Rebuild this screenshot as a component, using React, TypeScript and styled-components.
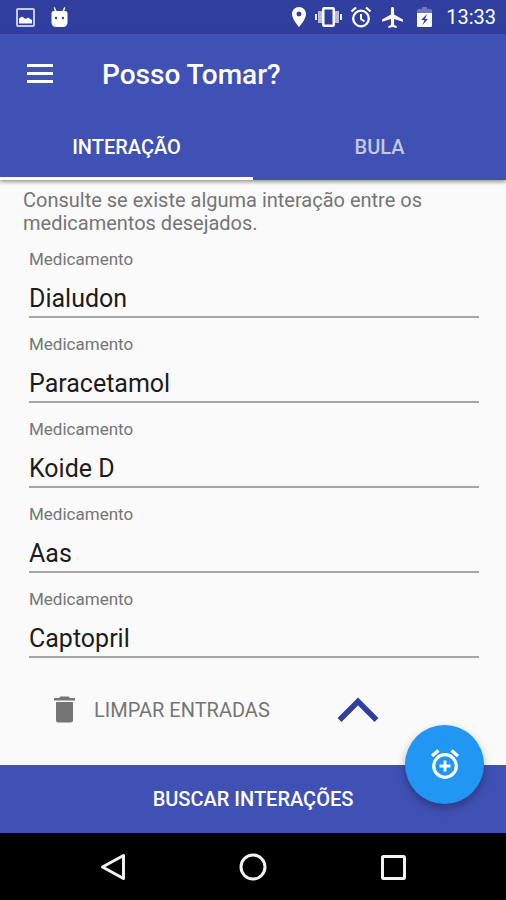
import React from "react";
import styled, { createGlobalStyle } from "styled-components";
import { MdAirplanemodeActive, MdLocationOn } from "react-icons/md";

const color = {
  primary: "#3f51b5",
  primaryDark: "#303f9f",
  accent: "#2196f3",
  surface: "#fafafa",
  textMuted: "#757575",
  text: "#1c1c1c",
};

const GlobalStyle = createGlobalStyle`
  *, *::before, *::after { box-sizing: border-box; }
  body { margin: 0; background: ${color.surface}; font-family: Roboto, sans-serif; }
  button, input { font-family: inherit; margin: 0; border: 0; padding: 0; background: none; border-radius: 0; }
  button { cursor: pointer; }
  svg { display: block; flex: none; }
`;

const Screen = styled.div`
  display: flex;
  flex-direction: column;
  min-height: 100vh;
  background: ${color.surface};
`;

const StatusBar = styled.div`
  display: flex;
  align-items: center;
  justify-content: space-between;
  height: 34px;
  padding: 0 10px 0 16px;
  background: ${color.primaryDark};
  color: #fff;
`;

const StatusGroup = styled.div<{ $gap: number }>`
  display: flex;
  align-items: center;
  gap: ${(p) => p.$gap}px;
`;

const Clock = styled.time`
  margin-left: 2px;
  font-size: 20px;
  line-height: 24px;
`;

const Header = styled.header`
  position: relative;
  background: ${color.primary};
  color: #fff;
  box-shadow: 0 2px 4px rgba(0, 0, 0, 0.4);
`;

const Toolbar = styled.div`
  display: flex;
  align-items: center;
  gap: 44px;
  height: 80px;
  padding: 0 22px;
`;

const IconButton = styled.button`
  display: flex;
  align-items: center;
  justify-content: center;
  color: inherit;
`;

const Title = styled.h1`
  margin: 0;
  padding-top: 2px;
  font-size: 28px;
  line-height: 32px;
  font-weight: 500;
`;

const Tabs = styled.div`
  display: grid;
  grid-template-columns: 1fr 1fr;
`;

const Tab = styled.button<{ $active?: boolean }>`
  height: 66px;
  padding-top: 2px;
  border-bottom: 3px solid ${(p) => (p.$active ? "#fff" : "transparent")};
  color: ${(p) => (p.$active ? "#fff" : "rgba(255, 255, 255, 0.7)")};
  font-size: 20px;
  line-height: 24px;
  font-weight: 500;
`;

const Content = styled.main`
  display: flex;
  flex-direction: column;
  flex: 1;
  padding: 9px 23px 0;
`;

const Intro = styled.p`
  margin: 0;
  color: ${color.textMuted};
  font-size: 20px;
  line-height: 23px;
`;

const Fields = styled.form`
  display: flex;
  flex-direction: column;
  gap: 14px;
  padding: 12px 4px 0 6px;
`;

const Field = styled.div`
  display: flex;
  flex-direction: column;
`;

const FieldLabel = styled.label`
  color: ${color.textMuted};
  font-size: 17px;
  line-height: 24px;
`;

const FieldInput = styled.input`
  && {
    width: 100%;
    height: 47px;
    padding: 12px 0 3px;
    border-bottom: 2px solid #a6a6a6;
    color: ${color.text};
    font-size: 25px;
    line-height: 30px;
    outline: none;
  }
`;

const Actions = styled.div`
  display: flex;
  align-items: center;
  gap: 67px;
  padding: 38px 31px 20px;
`;

const ClearButton = styled.button`
  display: flex;
  align-items: center;
  gap: 19px;
  color: ${color.textMuted};
  font-size: 20px;
  line-height: 24px;
`;

const Footer = styled.footer`
  position: relative;
`;

const SearchButton = styled.button`
  display: block;
  width: 100%;
  height: 68px;
  background: ${color.primary};
  color: #fff;
  font-size: 20px;
  line-height: 24px;
  font-weight: 500;
`;

const Fab = styled.button`
  position: absolute;
  top: -40px;
  right: 22px;
  display: flex;
  align-items: center;
  justify-content: center;
  width: 79px;
  height: 79px;
  border-radius: 50%;
  background: ${color.accent};
  color: #fff;
  box-shadow: 0 4px 9px rgba(0, 0, 0, 0.3);
`;

const NavBar = styled.nav`
  display: flex;
  align-items: center;
  justify-content: center;
  gap: 108px;
  height: 67px;
  background: #000;
  color: #f2f2f2;
`;

const PictureIcon = () => (
  <svg width="19" height="19" viewBox="0 0 19 19" aria-hidden="true">
    <rect x="1" y="1" width="17" height="17" rx="1" fill="none" stroke="#c5cae9" strokeWidth="2" />
    <path d="M3 15.500V10.500l3-2 3.500 2.500 2.500-1.500 4 2.500v3.500z" fill="#fff" />
  </svg>
);

const AndroidIcon = () => (
  <svg width="19" height="21" viewBox="0 0 19 21" aria-hidden="true">
    <path d="M4.500 1l1.500 4M14.500 1L13 5" stroke="#fff" strokeWidth="1.500" strokeLinecap="round" />
    <path d="M4 4h11q2.500 0 2.500 2.500V15q0 5-5 5h-6q-5 0-5-5V6.500Q1.500 4 4 4z" fill="#fff" />
    <circle cx="6" cy="11" r="1.200" fill={color.primaryDark} />
    <circle cx="13" cy="11" r="1.200" fill={color.primaryDark} />
  </svg>
);

const VibrationIcon = () => (
  <svg width="27" height="22" viewBox="0 0 27 22" aria-hidden="true">
    <path d="M3 5h4v12H3zM20 5h4v12h-4z" fill="#fff" fillOpacity="0.65" />
    <path d="M0 8h2v6H0zM25 8h2v6h-2z" fill="#fff" fillOpacity="0.9" />
    <rect x="8.250" y="2.250" width="10.500" height="17.500" rx="1" fill="none" stroke="#fff" strokeWidth="2.500" />
  </svg>
);

const AlarmIcon = () => (
  <svg width="22" height="22" viewBox="0 0 22 22" aria-hidden="true">
    <g fill="none" stroke="#fff" strokeWidth="2.300">
      <circle cx="11" cy="12.500" r="7.800" />
      <path d="M1.500 5.500l4.500-4M20.500 5.500L16 1.500" />
      <path d="M11 8v5l3.500 2.500" strokeWidth="2" />
    </g>
  </svg>
);

const BatteryIcon = () => (
  <svg width="15" height="22" viewBox="0 0 15 22" aria-hidden="true">
    <path d="M5 1h5v2h3.500q1.500 0 1.500 1.500V7H0V4.500Q0 3 1.500 3H5z" fill="#fff" fillOpacity="0.3" />
    <path
      fillRule="evenodd"
      d="M0 7h15v12.500q0 1.500-1.500 1.500h-12Q0 21 0 19.500zM10 8L4 14h3.500L5.500 19l5.500-6H8z"
      fill="#fff"
    />
  </svg>
);

const MenuIcon = () => (
  <svg width="36" height="36" viewBox="0 0 36 36" aria-hidden="true">
    <path d="M5 9.500h26M5 17.500h26M5 25.500h26" stroke="currentColor" strokeWidth="3" />
  </svg>
);

const TrashIcon = () => (
  <svg width="21" height="27" viewBox="0 0 21 27" aria-hidden="true">
    <path d="M0 2h5l1.500-1.500h8L16 2h5v2.500H0zM2 6h17v18q0 2.500-2.500 2.500h-12Q2 26.500 2 24z" fill="currentColor" />
  </svg>
);

const ChevronUpIcon = () => (
  <svg width="42" height="27" viewBox="0 0 42 27" aria-hidden="true">
    <path d="M2.500 24L21 5.500 39.500 24" fill="none" stroke="#303f9f" strokeWidth="5.500" />
  </svg>
);

const AlarmAddIcon = () => (
  <svg width="30" height="32" viewBox="0 0 30 32" aria-hidden="true">
    <g fill="none" stroke="currentColor">
      <circle cx="15" cy="17" r="11.300" strokeWidth="3.200" />
      <path d="M2 7l6.500-5.500M28 7l-6.500-5.500" strokeWidth="3.400" />
      <path d="M15 11.500v11M9.500 17h11" strokeWidth="2.800" />
    </g>
  </svg>
);

const BackIcon = () => (
  <svg width="32" height="32" viewBox="0 0 32 32" aria-hidden="true">
    <path d="M26.500 4.500v23L5.500 16z" fill="none" stroke="currentColor" strokeWidth="3" strokeLinejoin="round" />
  </svg>
);

const HomeIcon = () => (
  <svg width="32" height="32" viewBox="0 0 32 32" aria-hidden="true">
    <circle cx="16" cy="16" r="12" fill="none" stroke="currentColor" strokeWidth="3" />
  </svg>
);

const RecentsIcon = () => (
  <svg width="32" height="32" viewBox="0 0 32 32" aria-hidden="true">
    <rect x="5.500" y="5.500" width="22" height="22" rx="1" fill="none" stroke="currentColor" strokeWidth="3" />
  </svg>
);

const medicines = ["Dialudon", "Paracetamol", "Koide D", "Aas", "Captopril"];

export default function App() {
  return (
    <Screen>
      <GlobalStyle />
      <StatusBar>
        <StatusGroup $gap={15}>
          <PictureIcon />
          <AndroidIcon />
        </StatusGroup>
        <StatusGroup $gap={8}>
          <StatusGroup $gap={4}>
            <MdLocationOn size={24} />
            <VibrationIcon />
          </StatusGroup>
          <AlarmIcon />
          <StatusGroup $gap={12}>
            <MdAirplanemodeActive size={25} />
            <BatteryIcon />
            <Clock>13:33</Clock>
          </StatusGroup>
        </StatusGroup>
      </StatusBar>

      <Header>
        <Toolbar>
          <IconButton type="button" aria-label="Menu">
            <MenuIcon />
          </IconButton>
          <Title>Posso Tomar?</Title>
        </Toolbar>
        <Tabs role="tablist">
          <Tab type="button" role="tab" aria-selected="true" $active>
            INTERAÇÃO
          </Tab>
          <Tab type="button" role="tab" aria-selected="false">
            BULA
          </Tab>
        </Tabs>
      </Header>

      <Content>
        <Intro>Consulte se existe alguma interação entre os medicamentos desejados.</Intro>
        <Fields>
          {medicines.map((name, i) => (
            <Field key={name}>
              <FieldLabel htmlFor={`medicine-${i}`}>Medicamento</FieldLabel>
              <FieldInput id={`medicine-${i}`} type="text" defaultValue={name} />
            </Field>
          ))}
        </Fields>
        <Actions>
          <ClearButton type="button">
            <TrashIcon />
            LIMPAR ENTRADAS
          </ClearButton>
          <IconButton type="button" aria-label="Recolher">
            <ChevronUpIcon />
          </IconButton>
        </Actions>
      </Content>

      <Footer>
        <SearchButton type="button">BUSCAR INTERAÇÕES</SearchButton>
        <Fab type="button" aria-label="Adicionar alarme">
          <AlarmAddIcon />
        </Fab>
      </Footer>

      <NavBar aria-label="Sistema">
        <IconButton type="button" aria-label="Voltar">
          <BackIcon />
        </IconButton>
        <IconButton type="button" aria-label="Início">
          <HomeIcon />
        </IconButton>
        <IconButton type="button" aria-label="Recentes">
          <RecentsIcon />
        </IconButton>
      </NavBar>
    </Screen>
  );
}
